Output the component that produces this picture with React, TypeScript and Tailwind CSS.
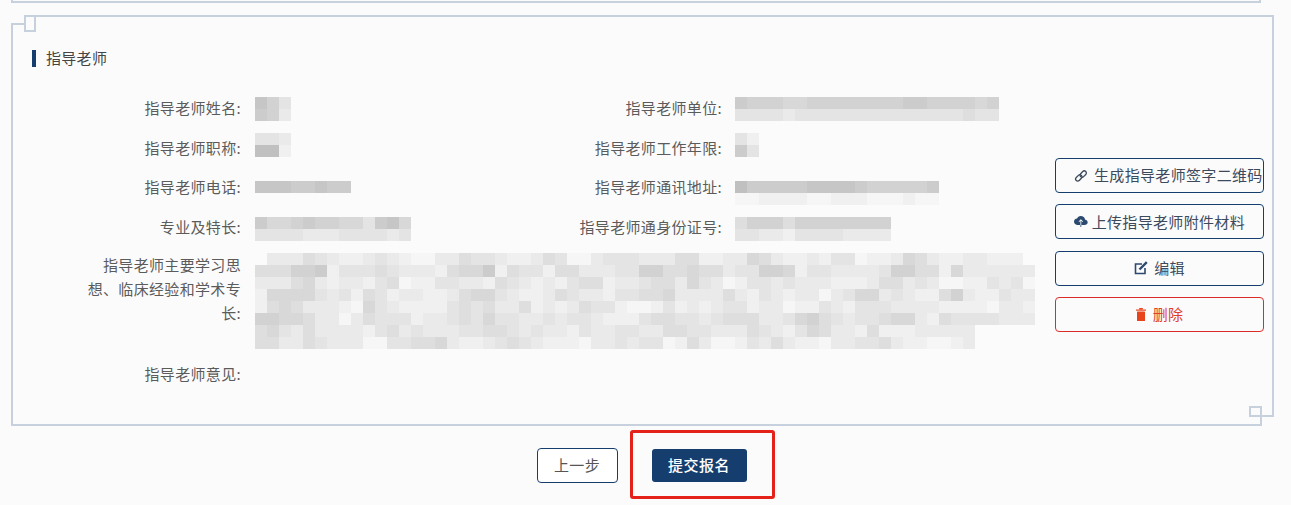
import type { ReactNode } from "react";
import { IoCloudUpload } from "react-icons/io5";

// each digit is one mosaic cell: 0 = darkest grey, 9 = near white, "-" = empty
const shade = (c: string) => {
  if (c === "-") return "transparent";
  const v = 0xc0 + Number(c) * 6;
  return `rgb(${v},${v},${v})`;
};

function Mosaic({ rows }: { rows: string[] }) {
  return (
    <div className="flex flex-col">
      {rows.map((row, i) => (
        <div key={i} className="flex h-[12px]">
          {row.split("").map((c, j) => (
            <div key={j} className="w-[12px] h-[12px]" style={{ background: shade(c) }} />
          ))}
        </div>
      ))}
    </div>
  );
}

const bigMosaic = [
  ("-7775678876789977566788756997666" + "77755887745788786698874578877888").slice(0, 64),
  ("55533286665677785" + "44285668557776633" + "55455766334866777763355847777777").slice(0, 65),
  ("77754787786598866" + "77856787865587765" + "57467986676777888755767998867697").slice(0, 65),
  ("84444676856877887" + "54467887567786655" + "47777578678779764476788537886777").slice(0, 65),
  ("85457778946788886" + "56577587875668998" + "68787668779886786667777888897788").slice(0, 65),
  ("33445779756668776" + "56466776766788865" + "56676555776435676654478566667773").slice(0, 65),
  ("54675777786576777" + "66556767786776677" + "5566777567864577858887777766").slice(0, 60),
  ("55775677799665547" + "88765678889776766" + "98579986757889776657889987788").slice(0, 60),
];

const infoRows = [
  {
    left: "指导老师姓名:",
    leftValue: ["136", "237"],
    right: "指导老师单位:",
    rightValue: ["2333443333333322333343", "6666766666666666666566"],
    offset: "mt-[1px]",
  },
  {
    left: "指导老师职称:",
    leftValue: ["667", "008"],
    right: "指导老师工作年限:",
    rightValue: ["68", "26"],
    offset: "-mt-[2.5px]",
  },
  {
    left: "指导老师电话:",
    leftValue: ["11122122"],
    right: "指导老师通讯地址:",
    rightValue: ["02222211112333332", "99888899888999899"],
    offset: "mt-[6px]",
  },
  {
    left: "专业及特长:",
    leftValue: ["2443233446214", "6666777666676"],
    right: "指导老师通身份证号:",
    rightValue: ["5333533333333", "6677866667777"],
    offset: "mt-[2.5px]",
  },
];

function ActionButton({ children, danger, className = "justify-center" }: { children: ReactNode; danger?: boolean; className?: string }) {
  return (
    <button
      className={`h-[35px] w-[209px] px-[18px] rounded-[4px] border flex items-center gap-[6px] text-[15px] tracking-[0.33px] whitespace-nowrap ${className} ${
        danger ? "border-[#dc2b2b] text-[#e0402a]" : "border-[#153e6e] text-[#3c4a5c]"
      }`}
    >
      {children}
    </button>
  );
}

export default function App() {
  return (
    <div
      className="h-[505px] w-[1291px] overflow-hidden bg-[#fbfbfb] text-[#4a4a4a]"
      style={{ fontFamily: '"Noto Sans CJK SC", "Liberation Sans", sans-serif' }}
    >
      {/* end of the previous card */}
      <div className="mx-[11px] w-[1250px] h-[3px] border-b-2 border-l-2 border-r-2 border-[#c7d0dd]" />

      {/* instructor card */}
      <div className="relative mt-[12px] mx-[11px] w-[1263px] h-[411px] border-2 border-[#c7d0dd] pt-[33px] pl-[19px]">
        {/* corner decorations */}
        <div className="absolute -left-[2px] -top-[2px] w-[13px] h-[8px] bg-[#fbfbfb]" />
        <div className="absolute -left-[2px] top-[6px] w-[13px] h-[2px] bg-[#c7d0dd]" />
        <div className="absolute left-[11px] -top-[2px] w-[12px] h-[17px] border-2 border-[#c7d0dd]" />
        <div className="absolute -right-[2px] -bottom-[2px] w-[12px] h-[9px] bg-[#fbfbfb]" />
        <div className="absolute -right-[2px] bottom-[7px] w-[12px] h-[2px] bg-[#c7d0dd]" />
        <div className="absolute right-[10px] bottom-[7px] w-[13px] h-[11px] border-2 border-[#c7d0dd]" />
        <div className="absolute right-[10px] -bottom-[2px] w-[2px] h-[9px] bg-[#c7d0dd]" />

        <div className="flex items-center h-[17px]">
          <div className="w-[4px] h-[17px] bg-[#153e6e]" />
          <span className="ml-[10px] text-[15px] tracking-[0.3px] text-[#444]">指导老师</span>
        </div>

        <div className="flex">
          {/* form */}
          <div className="w-[1004px] pt-[29px] text-[15px] tracking-[0.33px] text-[#5b5b5b]">
            {infoRows.map((row) => (
              <div key={row.left} className="grid grid-cols-[481px_1fr] h-[39.5px]">
                <div className="flex">
                  <div className="w-[209px] text-right leading-[24px] whitespace-nowrap">{row.left}</div>
                  <div className={`ml-[14px] ${row.offset}`}>
                    <Mosaic rows={row.leftValue} />
                  </div>
                </div>
                <div className="flex">
                  <div className="w-[209px] text-right leading-[24px] whitespace-nowrap">{row.right}</div>
                  <div className={`ml-[13px] ${row.offset}`}>
                    <Mosaic rows={row.rightValue} />
                  </div>
                </div>
              </div>
            ))}

            <div className="flex -mt-[1px]">
              <div className="w-[209px] shrink-0 pl-[55px] text-right leading-[24px]">
                指导老师主要学习思想、临床经验和学术专长:
              </div>
              <div className="ml-[14px] shrink-0">
                <Mosaic rows={bigMosaic} />
              </div>
            </div>

            <div className="flex mt-[13px]">
              <div className="w-[209px] text-right leading-[24px]">指导老师意见:</div>
            </div>
          </div>

          {/* actions */}
          <div className="flex flex-col gap-[11.33px] ml-[19px] pt-[91px] shrink-0">
            <ActionButton className="justify-start">
              <svg viewBox="0 0 14 14" className="w-[14px] h-[14px] shrink-0" fill="none" stroke="#3c4a5c" strokeWidth="1.3">
                <rect x="1.2" y="6.8" width="7.2" height="4.2" rx="2.1" transform="rotate(-45 4.8 8.9)" />
                <rect x="5.6" y="3" width="7.2" height="4.2" rx="2.1" transform="rotate(-45 9.2 5.1)" />
              </svg>
              生成指导老师签字二维码
            </ActionButton>
            <ActionButton className="justify-center !gap-[4px]">
              <IoCloudUpload className="w-[17px] h-[17px] text-[#2c4a70]" />
              上传指导老师附件材料
            </ActionButton>
            <ActionButton>
              <svg viewBox="0 0 14 14" className="w-[14px] h-[14px]" fill="none" stroke="#2c4a70" strokeWidth="1.6">
                <path d="M8 3H1.5v9.5h9.5V7" />
                <path d="M5.5 8.5 12.8 1.2" strokeWidth="2.4" />
              </svg>
              编辑
            </ActionButton>
            <ActionButton danger className="justify-center !gap-[7px]">
              <svg viewBox="0 0 10 13" className="w-[10px] h-[13px]" fill="#e8431c">
                <rect x="1" y="3.5" width="8" height="9.5" rx="0.6" />
                <rect x="0" y="1.5" width="10" height="1.2" />
                <rect x="3.2" y="0" width="3.6" height="1.6" />
              </svg>
              删除
            </ActionButton>
          </div>
        </div>
      </div>

      {/* footer */}
      <div className="relative flex justify-center items-center gap-[34px] h-[78px] pr-[8px]">
        <button className="h-[35px] w-[81px] rounded-[4px] border border-[#153e6e] bg-white text-[15px] tracking-[0.3px] text-[#555]">
          上一步
        </button>
        <button className="h-[33px] w-[95px] rounded-[3px] bg-[#153e6e] text-white text-[15px] font-medium tracking-[0.5px]">
          提交报名
        </button>
        <div className="absolute left-[630px] top-[4px] w-[145px] h-[69px] border-[3px] border-[#e5221a] rounded-[3px]" />
      </div>
    </div>
  );
}
